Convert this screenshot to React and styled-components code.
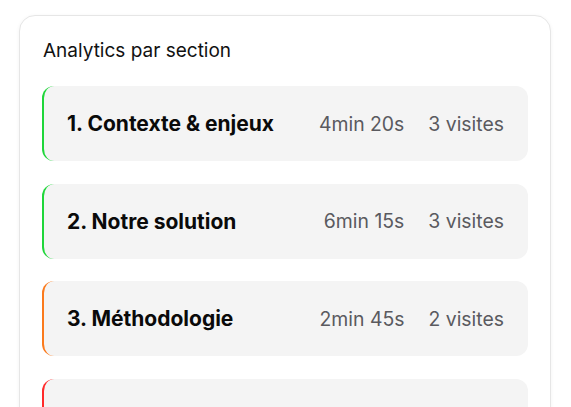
import React from "react";
import styled, { createGlobalStyle } from "styled-components";

const Global = createGlobalStyle`
  body {
    margin: 0;
    background: #fff;
    font-family: Inter, "Noto Sans", sans-serif;
    overflow: hidden;
  }
`;

const Page = styled.div`
  padding: 15px 0 0 19px;
  height: 407px;
  box-sizing: border-box;
`;

const Card = styled.div`
  width: 532px;
  height: 420px;
  box-sizing: border-box;
  border: 1px solid #e6e6e6;
  border-radius: 16px;
  background: #fff;
  box-shadow: 0 1px 4px rgba(0, 0, 0, 0.05);
  padding: 21px 22px 0 22px;
  display: flex;
  flex-direction: column;
  gap: 21px;
`;

const Title = styled.div`
  font-size: 19px;
  line-height: 28px;
  color: #111;
  padding-left: 1px;
`;

const List = styled.div`
  display: flex;
  flex-direction: column;
  gap: 22.5px;
`;

const Row = styled.div`
  height: 75px;
  flex-shrink: 0;
  box-sizing: border-box;
  background: #f4f4f4;
  border-radius: 12px;
  border-left: 2px solid ${(p) => p.color};
  display: flex;
  align-items: center;
  padding: 0 24px 0 23px;
`;

const Name = styled.div`
  flex: 1;
  font-size: 21px;
  font-weight: 700;
  color: #0a0a0a;
`;

const Stat = styled.div`
  font-size: 19.4px;
  color: #5a5a5f;
  margin-left: 24px;
`;

const sections = [
  { name: "1. Contexte & enjeux", time: "4min 20s", visits: "3 visites", color: "#1fd63a" },
  { name: "2. Notre solution", time: "6min 15s", visits: "3 visites", color: "#1fd63a" },
  { name: "3. Méthodologie", time: "2min 45s", visits: "2 visites", color: "#fb7a1c" },
  { name: "4. Budget", time: "1min 10s", visits: "1 visite", color: "#ff2a2a" },
];

export default function App() {
  return (
    <Page>
      <Global />
      <Card>
        <Title>Analytics par section</Title>
        <List>
          {sections.map((s) => (
            <Row key={s.name} color={s.color}>
              <Name>{s.name}</Name>
              <Stat>{s.time}</Stat>
              <Stat>{s.visits}</Stat>
            </Row>
          ))}
        </List>
      </Card>
    </Page>
  );
}
